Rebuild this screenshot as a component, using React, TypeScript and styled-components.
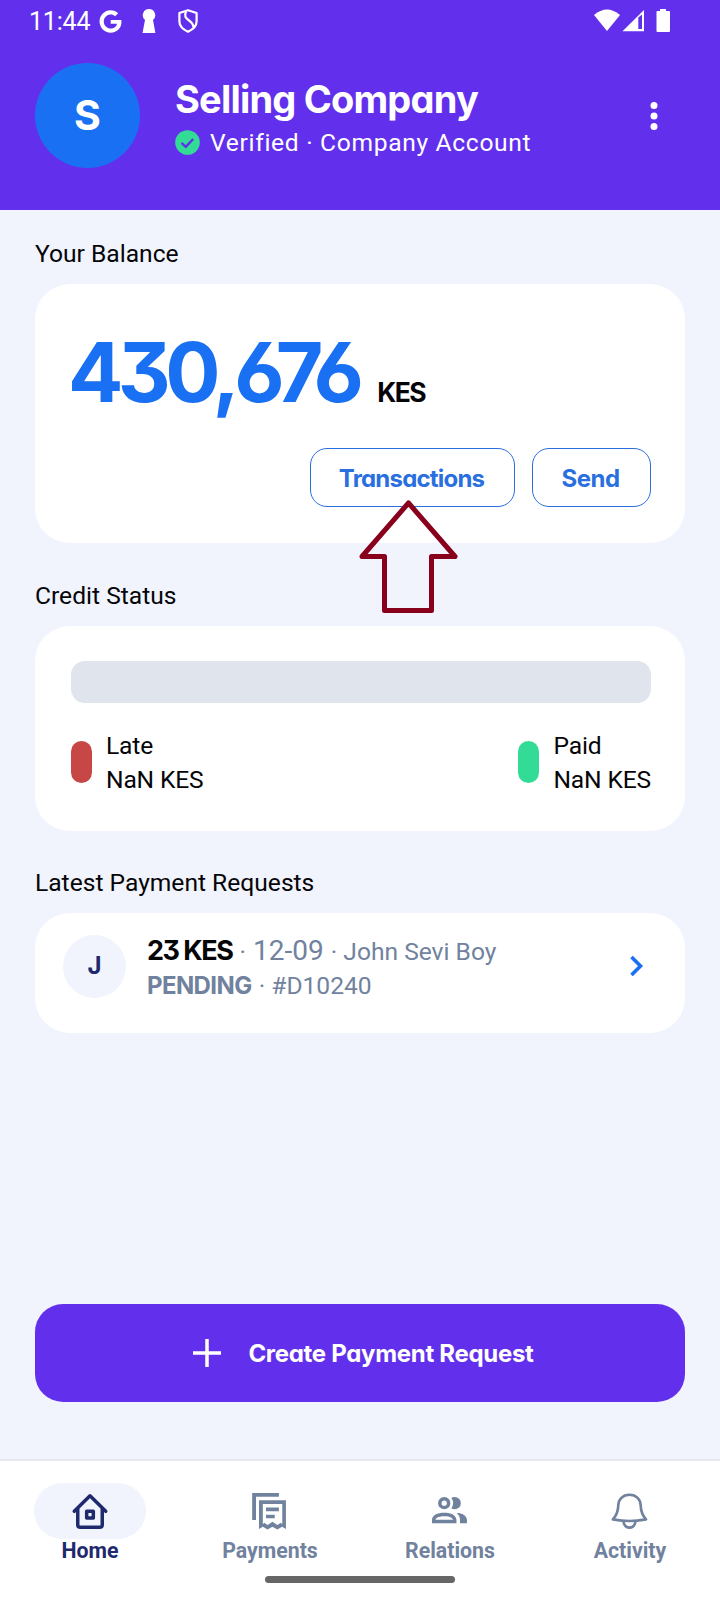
import React from 'react';
import styled, { createGlobalStyle } from 'styled-components';
import { FaGoogle } from 'react-icons/fa';

const color = {
  purple: '#6230ec',
  blue: '#1a70f3',
  link: '#2a6fe0',
  page: '#f1f4fd',
  slate: '#71829e',
  navy: '#1f2a6e',
  green: '#32dc96',
  red: '#c74646',
};

const GlobalStyle = createGlobalStyle`
  * { box-sizing: border-box; }
  body { margin: 0; background: ${color.page}; }
`;

const Screen = styled.div`
  position: relative;
  display: flex;
  flex-direction: column;
  width: 720px;
  height: 1600px;
  overflow: hidden;
  background: ${color.page};
  color: #050508;
  font-family: Roboto, sans-serif;
  font-size: 24.6px;
`;

const Display = styled.span<{ $size: number; $track?: number; $weight?: number; $color?: string }>`
  font-family: Inter, sans-serif;
  font-feature-settings: 'cv11', 'cv09', 'cv03', 'cv04';
  font-weight: ${(p) => p.$weight ?? 700};
  font-size: ${(p) => p.$size}px;
  letter-spacing: ${(p) => p.$track ?? 0}px;
  line-height: 1.2;
  white-space: nowrap;
  color: ${(p) => p.$color ?? 'inherit'};
`;

const Header = styled.header`
  height: 210px;
  background: ${color.purple};
  color: #fff;
`;

const StatusBar = styled.div`
  display: flex;
  align-items: center;
  justify-content: space-between;
  height: 42px;
  padding: 0 49px 0 29px;
`;

const StatusGroup = styled.div`
  display: flex;
  align-items: center;
`;

const Clock = styled.span`
  width: 70px;
  padding-top: 1px;
  font-size: 25px;
  line-height: 30px;
  letter-spacing: -0.2px;
`;

const Profile = styled.div`
  display: flex;
  align-items: center;
  height: 105px;
  margin-top: 21px;
  padding: 0 46px 0 35px;
`;

const Avatar = styled.div<{ $size: number; $bg: string }>`
  display: flex;
  flex: none;
  align-items: center;
  justify-content: center;
  width: ${(p) => p.$size}px;
  height: ${(p) => p.$size}px;
  border-radius: 50%;
  background: ${(p) => p.$bg};
`;

const Identity = styled.div`
  flex: 1;
  display: flex;
  flex-direction: column;
  margin-left: 35px;
  padding-top: 4px;
`;

const Verified = styled.div`
  display: flex;
  align-items: center;
  gap: 10px;
  height: 30px;
  margin-top: 5px;
  letter-spacing: 0.68px;
  white-space: nowrap;
`;

const Content = styled.main`
  flex: 1;
  display: flex;
  flex-direction: column;
  padding: 30px 35px 0;
`;

const SectionTitle = styled.h2`
  margin: -1px 0 15px;
  font-size: 24.6px;
  font-weight: 400;
  line-height: 30px;
`;

const Card = styled.section<{ $height: number; $pad: string; $after?: number }>`
  flex: none;
  height: ${(p) => p.$height}px;
  margin-bottom: ${(p) => p.$after ?? 0}px;
  padding: ${(p) => p.$pad};
  border-radius: 35px;
  background: #fff;
`;

const Amount = styled.div`
  display: flex;
  align-items: baseline;
  gap: 19px;
  height: 99px;
  margin-left: -2px;
`;

const Actions = styled.div`
  display: flex;
  justify-content: flex-end;
  gap: 17px;
  margin-top: 25px;
`;

const OutlineButton = styled.button<{ $width: number }>`
  display: flex;
  align-items: center;
  justify-content: center;
  width: ${(p) => p.$width}px;
  height: 59px;
  padding: 3px 2px 0 0;
  border: 1.500px solid ${color.link};
  border-radius: 17px;
  background: transparent;
  color: ${color.link};
`;

const CreditBar = styled.div`
  height: 42px;
  border-radius: 14px;
  background: #e0e4ec;
`;

const Legend = styled.div`
  display: flex;
  justify-content: space-between;
  margin-top: 26px;
`;

const LegendItem = styled.div`
  display: flex;
  align-items: flex-start;
  gap: 14px;
  line-height: 34px;
  letter-spacing: -0.15px;
`;

const Pill = styled.span<{ $bg: string }>`
  width: 21px;
  height: 42px;
  margin-top: 12px;
  border-radius: 11px;
  background: ${(p) => p.$bg};
`;

const Request = styled.div`
  display: flex;
  align-items: center;
  height: 64px;
`;

const RequestText = styled.div`
  flex: 1;
  margin-left: 21px;
  padding-top: 4px;
  color: ${color.slate};
`;

const RequestLine = styled.div<{ $height: number }>`
  display: flex;
  align-items: baseline;
  height: ${(p) => p.$height}px;
  line-height: ${(p) => p.$height}px;
  white-space: pre;
`;

const Details = styled.span`
  margin-left: 1px;
`;

const DateText = styled.span`
  margin-left: 1px;
  font-size: 28px;
`;

const CreateButton = styled.button`
  display: flex;
  flex: none;
  align-items: center;
  justify-content: center;
  gap: 27px;
  height: 98px;
  margin: auto 0 57px;
  padding: 0 0 0 7px;
  border: 0;
  border-radius: 28px;
  background: ${color.purple};
  color: #fff;
`;

const CreateLabel = styled(Display)`
  padding-top: 2px;
`;

const Nav = styled.nav`
  flex: none;
  display: grid;
  grid-template-columns: repeat(4, 180px);
  height: 141px;
  padding-top: 22px;
  border-top: 2px solid #e5e8ef;
  background: #fff;
`;

const NavItem = styled.div<{ $active?: boolean }>`
  display: flex;
  flex-direction: column;
  align-items: center;
  color: ${(p) => (p.$active ? color.navy : color.slate)};
  font-size: 21.3px;
  font-weight: 700;
  line-height: 24px;
`;

const NavIcon = styled.div<{ $active?: boolean }>`
  display: flex;
  align-items: center;
  justify-content: center;
  width: 112px;
  height: 56px;
  border-radius: 28px;
  background: ${(p) => (p.$active ? color.page : 'transparent')};
`;

const HomeIndicator = styled.div`
  position: absolute;
  left: 265px;
  bottom: 17px;
  width: 190px;
  height: 7px;
  border-radius: 4px;
  background: #666;
`;

const Pointer = styled.svg`
  position: absolute;
  left: 355px;
  top: 495px;
`;

const KeyholeSvg = styled.svg`
  margin-left: 20px;
`;

const ShieldSvg = styled.svg`
  margin-left: 22px;
`;

const Keyhole = () => (
  <KeyholeSvg width="14" height="24" viewBox="0 0 14 24">
    <path d="M7 0a6.300 6.300 0 0 1 4 11.100L13.400 24H.5L3 11.100A6.300 6.300 0 0 1 7 0Z" fill="#fff" />
  </KeyholeSvg>
);

const Shield = () => (
  <ShieldSvg width="20" height="24" viewBox="0 0 20 24" fill="none" stroke="#fff" strokeWidth="2.200" strokeLinejoin="round">
    <path d="M10 1.200 18.600 4v8.500c0 4.700-4.200 8.200-8.600 10.300C5.600 20.700 1.400 17.200 1.400 12.500V4Z" />
    <path d="M8 2.500C6 7 7.500 9 11 11.500s4.800 4 4.300 7" />
  </ShieldSvg>
);

const StatusIcons = () => (
  <svg width="78" height="24" viewBox="0 0 78 24" fill="#fff">
    <path d="M1 6Q14-5 27 6L14 22Z" />
    <path fillRule="evenodd" d="M51 1v21.300H29.500ZM45.300 8.500v11.500H49V5.500Z" />
    <path d="M67 0h6v2h3a1 1 0 0 1 1 1v19a1 1 0 0 1-1 1H64.500a1 1 0 0 1-1-1V3a1 1 0 0 1 1-1H67Z" />
  </svg>
);

const HomeIcon = () => (
  <svg width="42" height="42" viewBox="0 0 24 24" fill="none" stroke="currentColor" strokeWidth="2" strokeLinecap="round" strokeLinejoin="round">
    <path d="M3 12.200 12 3.300l9 8.900" />
    <path d="M5 11v8.800c0 .9.600 1.500 1.500 1.500h11c.9 0 1.500-.6 1.500-1.500V11" />
    <path d="M10.100 12.100h3.800v3.900h-3.800Z" />
  </svg>
);

const PaymentsIcon = () => (
  <svg width="42" height="42" viewBox="0 0 24 24" fill="currentColor">
    <path d="M1.800 1.700h15.300v2.200H4v13.200H1.800Z" />
    <path
      fillRule="evenodd"
      d="M5.700 5.800h15.400v16.500l-2.200-1.300-2.700 1.600-2.800-1.600-2.800 1.600-2.700-1.600-2.200 1.300ZM7.900 8v11.600l.8-.9 1.900 1.300 2.800-1.800 2.800 1.800 2-1.300.8.900V8Z"
    />
    <path d="M9.700 10h7.400v2.200H9.700ZM9.700 14.100h5v2h-5Z" />
  </svg>
);

const RelationsIcon = () => (
  <svg width="42" height="42" viewBox="0 0 24 24" fill="currentColor">
    <path d="M13.070 10.410A5 5 0 0 0 13.070 4.590A3.390 3.390 0 0 1 15 4A3.500 3.500 0 0 1 15 11A3.390 3.390 0 0 1 13.070 10.410M5.500 7.500A3.500 3.500 0 1 1 9 11A3.500 3.500 0 0 1 5.500 7.500M7.500 7.500A1.500 1.500 0 1 0 9 6A1.500 1.500 0 0 0 7.500 7.500M16 17V19H2V17S2 13 9 13 16 17 16 17M14 17C13.860 16.220 12.670 15 9 15S4.070 16.310 4 17M15.950 13A5.320 5.320 0 0 1 18 17V19H22V17S22 13.370 15.940 13Z" transform="translate(-.3 0)" />
  </svg>
);

const BellIcon = () => (
  <svg width="42" height="42" viewBox="0 0 24 24" fill="none" stroke="currentColor" strokeWidth="1.500" strokeLinejoin="round">
    <path d="M11.700 2.700c3.900 0 6.300 2.700 6.400 6.100.1 3.600.8 5.600 3.100 8-2.900.5-6.400.9-9.500.9s-6.600-.4-9.500-.9c2.300-2.400 3-4.400 3.100-8 .1-3.400 2.500-6.100 6.400-6.100Z" />
    <path d="M8.200 17.600c.3 2.300 1.600 3.900 3.500 3.900s3.200-1.600 3.500-3.900" />
  </svg>
);

const tabs = [
  { label: 'Home', Icon: HomeIcon, active: true },
  { label: 'Payments', Icon: PaymentsIcon },
  { label: 'Relations', Icon: RelationsIcon },
  { label: 'Activity', Icon: BellIcon },
];

export default function App() {
  return (
    <Screen>
      <GlobalStyle />
      <Header>
        <StatusBar>
          <StatusGroup>
            <Clock>11:44</Clock>
            <FaGoogle size={23} />
            <Keyhole />
            <Shield />
          </StatusGroup>
          <StatusIcons />
        </StatusBar>
        <Profile>
          <Avatar $size={105} $bg={color.blue}>
            <Display $size={41}>S</Display>
          </Avatar>
          <Identity>
            <Display $size={38} $track={-0.8}>Selling Company</Display>
            <Verified>
              <svg width="25" height="25" viewBox="0 0 25 25" fill="none">
                <circle cx="12.500" cy="12.500" r="12.300" fill={color.green} />
                <path d="m6.500 12.800 4.300 4L18.200 9" stroke={color.purple} strokeWidth="2.400" />
              </svg>
              Verified · Company Account
            </Verified>
          </Identity>
          <svg width="40" height="30" viewBox="0 0 40 30" fill="#fff">
            <circle cx="20" cy="4.500" r="3.500" />
            <circle cx="20" cy="15" r="3.500" />
            <circle cx="20" cy="25.500" r="3.500" />
          </svg>
        </Profile>
      </Header>

      <Content>
        <SectionTitle>Your Balance</SectionTitle>
        <Card $height={259} $pad="40px 34px 0 35px" $after={39}>
          <Amount>
            <Display $size={82} $track={-5.6} $color={color.blue}>430,676</Display>
            <Display $size={26.5} $track={-1.5} $color="#050508">KES</Display>
          </Amount>
          <Actions>
            <OutlineButton $width={205}>
              <Display $size={24} $track={-0.8} $weight={700}>Transactions</Display>
            </OutlineButton>
            <OutlineButton $width={119}>
              <Display $size={24} $track={-0.5} $weight={700}>Send</Display>
            </OutlineButton>
          </Actions>
        </Card>

        <SectionTitle>Credit Status</SectionTitle>
        <Card $height={205} $pad="35px 34px 0 36px" $after={38}>
          <CreditBar />
          <Legend>
            <LegendItem>
              <Pill $bg={color.red} />
              <div>
                Late
                <br />
                NaN KES
              </div>
            </LegendItem>
            <LegendItem>
              <Pill $bg={color.green} />
              <div>
                Paid
                <br />
                NaN KES
              </div>
            </LegendItem>
          </Legend>
        </Card>

        <SectionTitle>Latest Payment Requests</SectionTitle>
        <Card $height={120} $pad="21px 35px 0 28px">
          <Request>
            <Avatar $size={63} $bg={color.page}>
              <Display $size={24} $color={color.navy}>J</Display>
            </Avatar>
            <RequestText>
              <RequestLine $height={35}>
                <Display $size={27} $track={-1.5} $color="#050508">23 KES</Display>
                <Details> · </Details>
                <DateText>12-09</DateText>
                <Details> · John Sevi Boy</Details>
              </RequestLine>
              <RequestLine $height={35}>
                <Display $size={24} $track={-0.6}>PENDING</Display>
                <Details> · #D10240</Details>
              </RequestLine>
            </RequestText>
            <svg width="26" height="26" viewBox="0 0 26 26" fill="none" stroke={color.blue} strokeWidth="3.600">
              <path d="m7.500 4 9 9-9 9" />
            </svg>
          </Request>
        </Card>

        <CreateButton>
          <svg width="28" height="28" viewBox="0 0 28 28" stroke="#fff" strokeWidth="3.500">
            <path d="M14 0v28M0 14h28" />
          </svg>
          <CreateLabel $size={24} $track={-0.3} $weight={700}>Create Payment Request</CreateLabel>
        </CreateButton>
      </Content>

      <Nav>
        {tabs.map(({ label, Icon, active }) => (
          <NavItem key={label} $active={active}>
            <NavIcon $active={active}>
              <Icon />
            </NavIcon>
            {label}
          </NavItem>
        ))}
      </Nav>
      <HomeIndicator />
      <Pointer width="108" height="120" viewBox="0 0 108 120" fill="none" stroke="#88001b" strokeWidth="5" strokeLinejoin="round">
        <path d="m53.500 8 46.500 53.500H76.500V115.500H29.500V61.500H7Z" />
      </Pointer>
    </Screen>
  );
}
